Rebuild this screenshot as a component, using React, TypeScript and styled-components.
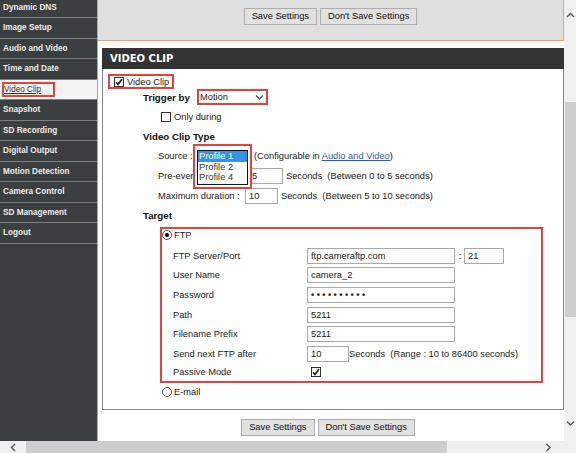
import React from "react";
import styled, { createGlobalStyle } from "styled-components";

const GlobalStyle = createGlobalStyle`
  html, body {
    margin: 0;
    padding: 0;
    background: #ffffff;
  }
  body {
    font-family: "Liberation Sans", Arial, sans-serif;
    font-size: 9.3px;
    color: #222;
  }
  * {
    box-sizing: border-box;
  }
`;

const RED = "#e6423c";

const Viewport = styled.div`
  width: 576px;
  height: 453px;
  overflow: hidden;
  display: grid;
  grid-template-columns: 564px 12px;
  grid-template-rows: 441px 12px;
`;

const Page = styled.div`
  overflow: hidden;
`;

const PageInner = styled.div`
  display: flex;
  height: 444px;
  margin-top: -3px;
`;

/* ---------- sidebar ---------- */

const Sidebar = styled.nav`
  width: 98px;
  flex: none;
  background: #3c3f40;
  border-right: 1px solid #a6a6a6;
  padding-top: 0.5px;
`;

const NavItem = styled.div<{ $active?: boolean }>`
  height: 20.5px;
  display: flex;
  align-items: center;
  padding-left: ${(p) => (p.$active ? "2px" : "3px")};
  border-bottom: 1px solid #7d7f80;
  background: ${(p) => (p.$active ? "#f4f4f4" : "transparent")};
  color: ${(p) => (p.$active ? "#333" : "#ececec")};
  font-size: 8.2px;
  font-weight: ${(p) => (p.$active ? 400 : 700)};
  white-space: nowrap;
`;

const ActiveMark = styled.span`
  display: inline-flex;
  align-items: center;
  height: 15px;
  border: 2px solid ${RED};
  padding: 0 12px 0 0;
  text-decoration: underline;
`;

/* ---------- main column ---------- */

const Main = styled.main`
  flex: 1;
  display: flex;
  flex-direction: column;
`;

const TopPanel = styled.div`
  height: 44px;
  background: #dfdfdf;
  border-right: 1px solid #f2a25a;
  border-bottom: 1px solid #f2a25a;
  display: flex;
  justify-content: center;
  align-items: flex-start;
  gap: 3px;
  padding-top: 11px;
`;

const Button = styled.button`
  height: 17px;
  padding: 0 7px;
  border: 1px solid #acacac;
  background: #e1e1e1;
  font-family: inherit;
  font-size: 9.3px;
  color: #111;
  line-height: 15px;
`;

const Panel = styled.section`
  margin: 7px 0 0 4px;
`;

const PanelHeader = styled.h2`
  margin: 0;
  height: 21px;
  line-height: 21px;
  background: #333333;
  color: #ffffff;
  font-family: "DejaVu Sans", Verdana, sans-serif;
  font-size: 10px;
  font-weight: 700;
  padding-left: 8px;
`;

const PanelBody = styled.div`
  border: 1px solid #8a8a8a;
  border-top: none;
  padding-bottom: 7.4px;
`;

const ClipToggle = styled.div`
  margin: 5px 0 0 5px;
  display: inline-flex;
  align-items: center;
  gap: 3px;
  height: 15px;
  border: 2px solid ${RED};
  padding: 0 3px 0 4px;
`;

const Rows = styled.div`
  margin-top: -1.9px;
`;

const Row = styled.div<{ $indent: number }>`
  height: 19.8px;
  display: flex;
  align-items: center;
  padding-left: ${(p) => p.$indent}px;
  white-space: nowrap;
`;

const Heading = styled.span<{ $w?: number }>`
  font-weight: 700;
  font-size: 9.7px;
  color: #111;
  ${(p) => (p.$w ? `width: ${p.$w}px;` : "")}
`;

const Label = styled.span<{ $w: number }>`
  width: ${(p) => p.$w}px;
  flex: none;
`;

const SelectFrame = styled.div`
  width: 71px;
  height: 16px;
  border: 2px solid ${RED};
`;

const Select = styled.div`
  height: 100%;
  background: #fff;
  display: flex;
  align-items: center;
  justify-content: space-between;
  padding: 0 2px 0 1px;
`;

const Input = styled.input<{ $w: number }>`
  width: ${(p) => p.$w}px;
  height: 16px;
  border: 1px solid #a9a9a9;
  padding: 0 3px;
  margin: 0;
  font-family: inherit;
  font-size: 9.3px;
  color: #222;
  background: #fff;
  outline: none;
`;

const Dots = styled(Input)`
  letter-spacing: 2.4px;
  font-weight: 700;
`;

const Unit = styled.span<{ $gap?: number }>`
  margin-left: ${(p) => p.$gap ?? 0}px;
`;

const Link = styled.a`
  color: #1d5fc9;
  text-decoration: underline;
`;

const SourceSlot = styled.span`
  position: relative;
  display: inline-block;
  width: 59px;
  height: 16px;
  margin-right: 2px;
`;

const ListFrame = styled.div`
  position: absolute;
  left: 0;
  top: -4.4px;
  width: 59px;
  height: 45px;
  border: 2px solid ${RED};
  padding: 4px 2px 2px 2px;
  background: #fff;
  z-index: 2;
`;

const ListBox = styled.ul`
  margin: 0;
  padding: 0;
  list-style: none;
  height: 100%;
  border: 1.5px solid #141414;
  background: #fff;
`;

const ListOption = styled.li<{ $selected?: boolean }>`
  height: 10.7px;
  line-height: 10.7px;
  padding-left: 1px;
  color: ${(p) => (p.$selected ? "#fff" : "#333")};
  background: ${(p) => (p.$selected ? "#3592e4" : "transparent")};
`;

const TargetBox = styled.div`
  margin: 1.3px 0 0 57px;
  width: 383px;
  border: 2px solid ${RED};
`;

const RadioRow = styled.div<{ $h: number; $indent?: number }>`
  height: ${(p) => p.$h}px;
  display: flex;
  align-items: center;
  gap: 2px;
  padding-left: ${(p) => p.$indent ?? 0}px;
`;

const FieldGrid = styled.div`
  margin-top: 4px;
  padding-left: 11px;
  display: grid;
  grid-template-columns: 134px 1fr;
  grid-template-rows: repeat(6, 19.6px) 17px;
  align-items: center;
  white-space: nowrap;
`;

const FieldValue = styled.div`
  display: flex;
  align-items: center;
`;

const Colon = styled.span`
  margin: 0 2.4px 0 4px;
`;

const BoxMark = styled.span<{ $ml?: number }>`
  width: 10px;
  height: 10px;
  flex: none;
  margin-left: ${(p) => p.$ml ?? 0}px;
  border: 1px solid #333;
  background: #fff;
  display: inline-flex;
  align-items: center;
  justify-content: center;
`;

const RadioMark = styled.span`
  width: 10px;
  height: 10px;
  flex: none;
  border: 1px solid #555;
  border-radius: 50%;
  background: #fff;
  display: inline-flex;
  align-items: center;
  justify-content: center;
`;

const RadioDot = styled.span`
  width: 4px;
  height: 4px;
  border-radius: 50%;
  background: #000;
`;

const BottomBar = styled.div`
  margin-top: 9.5px;
  padding-right: 6px;
  display: flex;
  justify-content: center;
  gap: 3px;
`;

/* ---------- scrollbars ---------- */

const VScroll = styled.div`
  background: #f0f0f0;
  display: flex;
  flex-direction: column;
`;

const HScroll = styled.div`
  background: #f0f0f0;
  display: flex;
  align-items: stretch;
`;

const Corner = styled.div`
  background: #f0f0f0;
`;

const ArrowCell = styled.div<{ $w?: number; $h?: number }>`
  ${(p) => (p.$w ? `width: ${p.$w}px;` : "")}
  ${(p) => (p.$h ? `height: ${p.$h}px;` : "")}
  flex: none;
  display: flex;
  align-items: center;
  justify-content: center;
`;

const VTrack = styled.div`
  flex: 1;
  padding: 72px 0 0 1px;
`;

const VThumb = styled.div`
  height: 215px;
  background: #cdcdcd;
`;

const HThumb = styled.div`
  width: 421px;
  background: #cdcdcd;
`;

const Spacer = styled.div`
  flex: 1;
`;

type Dir = "up" | "down" | "left" | "right";

const chevronPaths: Record<Dir, string> = {
  up: "M1 5 L4.5 1.5 L8 5",
  down: "M1 1.5 L4.5 5 L8 1.5",
  left: "M5 1 L1.5 4.5 L5 8",
  right: "M1.5 1 L5 4.5 L1.5 8",
};

const Chevron = ({ dir }: { dir: Dir }) => {
  const vertical = dir === "up" || dir === "down";
  return (
    <svg
      width={vertical ? 9 : 7}
      height={vertical ? 7 : 9}
      viewBox={vertical ? "0 0 9 7" : "0 0 7 9"}
    >
      <path d={chevronPaths[dir]} fill="none" stroke="#555" strokeWidth="1.4" />
    </svg>
  );
};

const Check = () => (
  <svg width="8" height="8" viewBox="0 0 8 8">
    <path d="M1 4.2 L3 6.5 L7 1" fill="none" stroke="#111" strokeWidth="1.5" />
  </svg>
);

const Checkbox = ({ checked, ml }: { checked?: boolean; ml?: number }) => (
  <BoxMark $ml={ml}>{checked && <Check />}</BoxMark>
);

const Radio = ({ checked }: { checked?: boolean }) => (
  <RadioMark>{checked && <RadioDot />}</RadioMark>
);

const menu = [
  "Dynamic DNS",
  "Image Setup",
  "Audio and Video",
  "Time and Date",
  "Video Clip",
  "Snapshot",
  "SD Recording",
  "Digital Output",
  "Motion Detection",
  "Camera Control",
  "SD Management",
  "Logout",
];

const App = () => {
  return (
    <>
      <GlobalStyle />
      <Viewport>
        <Page>
          <PageInner>
            <Sidebar>
              {menu.map((item) =>
                item === "Video Clip" ? (
                  <NavItem key={item} $active>
                    <ActiveMark>{item}</ActiveMark>
                  </NavItem>
                ) : (
                  <NavItem key={item}>{item}</NavItem>
                )
              )}
            </Sidebar>

            <Main>
              <TopPanel>
                <Button>Save Settings</Button>
                <Button>Don't Save Settings</Button>
              </TopPanel>

              <Panel>
                <PanelHeader>VIDEO CLIP</PanelHeader>
                <PanelBody>
                  <ClipToggle>
                    <Checkbox checked />
                    <span>Video Clip</span>
                  </ClipToggle>

                  <Rows>
                    <Row $indent={40}>
                      <Heading $w={54}>Trigger by</Heading>
                      <SelectFrame>
                        <Select>
                          <span>Motion</span>
                          <Chevron dir="down" />
                        </Select>
                      </SelectFrame>
                    </Row>
                    <Row $indent={58}>
                      <Checkbox />
                      <Unit $gap={3}>Only during</Unit>
                    </Row>
                    <Row $indent={40}>
                      <Heading>Video Clip Type</Heading>
                    </Row>
                    <Row $indent={55}>
                      <Label $w={35}>Source :</Label>
                      {/* the list is shown open, lying over the rows below */}
                      <SourceSlot>
                        <ListFrame>
                          <ListBox>
                            <ListOption $selected>Profile 1</ListOption>
                            <ListOption>Profile 2</ListOption>
                            <ListOption>Profile 4</ListOption>
                          </ListBox>
                        </ListFrame>
                      </SourceSlot>
                      <span>
                        (Configurable in <Link>Audio and Video</Link>)
                      </span>
                    </Row>
                    <Row $indent={55}>
                      <Label $w={90}>Pre-event :</Label>
                      <Input $w={35} readOnly value="5" />
                      <Unit $gap={3}>Seconds&nbsp;&nbsp;(Between 0 to 5 seconds)</Unit>
                    </Row>
                    <Row $indent={55}>
                      <Label $w={87}>Maximum duration :</Label>
                      <Input $w={33} readOnly value="10" />
                      <Unit $gap={3}>Seconds&nbsp;&nbsp;(Between 5 to 10 seconds)</Unit>
                    </Row>
                    <Row $indent={40}>
                      <Heading>Target</Heading>
                    </Row>
                  </Rows>

                  <TargetBox>
                    <RadioRow $h={13}>
                      <Radio checked />
                      <span>FTP</span>
                    </RadioRow>
                    <FieldGrid>
                      <span>FTP Server/Port</span>
                      <FieldValue>
                        <Input $w={148} readOnly value="ftp.cameraftp.com" />
                        <Colon>:</Colon>
                        <Input $w={40} readOnly value="21" />
                      </FieldValue>
                      <span>User Name</span>
                      <FieldValue>
                        <Input $w={148} readOnly value="camera_2" />
                      </FieldValue>
                      <span>Password</span>
                      <FieldValue>
                        <Dots $w={148} readOnly value="••••••••••" />
                      </FieldValue>
                      <span>Path</span>
                      <FieldValue>
                        <Input $w={148} readOnly value="5211" />
                      </FieldValue>
                      <span>Filename Prefix</span>
                      <FieldValue>
                        <Input $w={148} readOnly value="5211" />
                      </FieldValue>
                      <span>Send next FTP after</span>
                      <FieldValue>
                        <Input $w={42} readOnly value="10" />
                        <Unit>Seconds&nbsp;&nbsp;(Range : 10 to 86400 seconds)</Unit>
                      </FieldValue>
                      <span>Passive Mode</span>
                      <FieldValue>
                        <Checkbox checked ml={4} />
                      </FieldValue>
                    </FieldGrid>
                  </TargetBox>

                  <RadioRow $h={19} $indent={59}>
                    <Radio />
                    <span>E-mail</span>
                  </RadioRow>
                </PanelBody>
              </Panel>

              <BottomBar>
                <Button>Save Settings</Button>
                <Button>Don't Save Settings</Button>
              </BottomBar>
            </Main>
          </PageInner>
        </Page>

        <VScroll>
          <ArrowCell $h={30}>
            <Chevron dir="up" />
          </ArrowCell>
          <VTrack>
            <VThumb />
          </VTrack>
          <ArrowCell $h={36}>
            <Chevron dir="down" />
          </ArrowCell>
        </VScroll>

        <HScroll>
          <ArrowCell $w={26}>
            <Chevron dir="left" />
          </ArrowCell>
          <HThumb />
          <Spacer />
          <ArrowCell $w={32}>
            <Chevron dir="right" />
          </ArrowCell>
        </HScroll>
        <Corner />
      </Viewport>
    </>
  );
};

export default App;
